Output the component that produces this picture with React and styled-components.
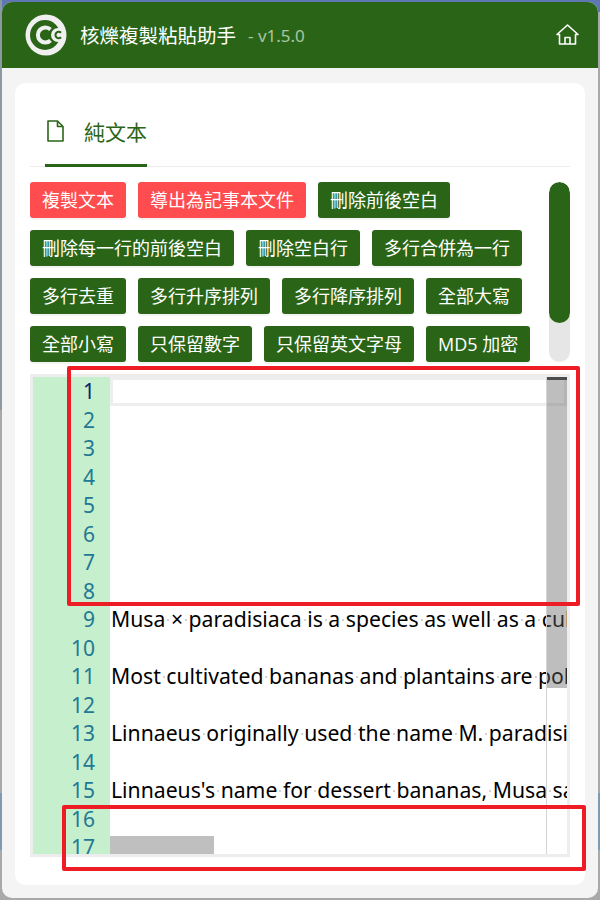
import styled, { createGlobalStyle } from "styled-components";

const GlobalStyle = createGlobalStyle`
  html, body {
    margin: 0;
    height: 900px;
    overflow: hidden;
    background:
      linear-gradient(#8b99a3, #8b99a3) left top / 2px 410px no-repeat,
      linear-gradient(
        to bottom,
        #5f78b4 0,
        #5f78b4 12px,
        #a9a9a9 12px,
        #a9a9a9 793px,
        #7f9ab3 793px,
        #7f9ab3 850px,
        #a9a9a9 850px
      );
    font-family: "Noto Sans", "Noto Sans CJK TC", sans-serif;
  }
`;

const Window = styled.div`
  position: relative;
  box-sizing: border-box;
  width: 596px;
  height: 896px;
  margin: 2px 0 0 2px;
  display: flex;
  flex-direction: column;
  background: #f4f4f4;
  border-radius: 10px;
  overflow: hidden;
`;

const Header = styled.header`
  flex: none;
  height: 66px;
  display: flex;
  align-items: center;
  padding: 0 19px 0 23px;
  background: #2a6517;
  color: #fff;
`;

const Title = styled.h1`
  margin: 0 0 0 13px;
  font-size: 19.5px;
  line-height: 1;
  font-weight: 400;
  font-family: "Noto Sans CJK TC", sans-serif;
`;

const Version = styled.span`
  margin-left: 12px;
  font-size: 17px;
  color: #a9c6a4;
`;

const HomeLink = styled.a`
  margin: -1px 0 0 auto;
  display: flex;
  color: #fff;
`;

const Card = styled.main`
  flex: 1;
  margin: 15px 13px 13px;
  padding: 0 15px;
  display: flex;
  flex-direction: column;
  background: #fff;
  border-radius: 10px;
`;

const Tabs = styled.nav`
  flex: none;
  height: 84px;
  box-sizing: border-box;
  display: flex;
  align-items: flex-end;
  border-bottom: 1px solid #ececec;
  padding-left: 15px;
`;

const Tab = styled.div`
  width: 102px;
  height: 61px;
  box-sizing: border-box;
  display: flex;
  align-items: flex-start;
  gap: 20px;
  padding: 11px 0 0 2px;
  margin-bottom: -1px;
  color: #2a6517;
  border-bottom: 3px solid #2a6517;
  font-size: 21px;
  line-height: 28px;
  font-family: "Noto Sans CJK TC", sans-serif;
  white-space: nowrap;

  svg {
    flex: none;
    margin-top: 3px;
  }
`;

const ToolRow = styled.div`
  flex: none;
  height: 180px;
  margin-top: 15px;
  display: flex;
  justify-content: space-between;
`;

const Buttons = styled.div`
  width: 510px;
  display: flex;
  flex-wrap: wrap;
  align-content: flex-start;
  gap: 12px;
`;

const Button = styled.button`
  height: 36px;
  padding: 0 12px;
  border: 0;
  border-radius: 3px;
  background: ${(p) => (p.$danger ? "#ff4d4f" : "#2a6517")};
  box-shadow: 0 2px 0 rgba(0, 0, 0, 0.045);
  color: #fff;
  font-size: 18px;
  line-height: 36px;
  font-family: "Open Sans", "Noto Sans CJK TC", sans-serif;
  white-space: nowrap;
`;

const ScrollTrack = styled.div`
  width: 21px;
  height: 180px;
  border-radius: 11px;
  background: #e6e6e6;
  overflow: hidden;
`;

const ScrollThumb = styled.div`
  height: 141px;
  border-radius: 11px;
  background: #2a6517;
`;

const Editor = styled.section`
  position: relative;
  flex: none;
  box-sizing: border-box;
  height: 483px;
  margin-top: 12px;
  border: 3px solid #ededed;
  display: flex;
  overflow: hidden;
`;

const Gutter = styled.div`
  flex: none;
  width: 77px;
  box-sizing: border-box;
  padding-right: 15px;
  background: #c6efce;
  text-align: right;
`;

const LineNo = styled.div`
  height: 28.5px;
  font-size: 21px;
  line-height: 28.5px;
  color: ${(p) => (p.$active ? "#0b216f" : "#237893")};
`;

const Code = styled.div`
  flex: 1;
  min-width: 0;
  overflow: hidden;
`;

const CodeLine = styled.div`
  height: 28.5px;
  box-sizing: border-box;
  padding-left: 1px;
  font-size: 21.2px;
  line-height: 28.5px;
  color: #000;
  white-space: pre;
  ${(p) => p.$active && "border: 3px solid #eeeeee;"}
`;

const Space = styled.span`
  position: relative;
  &::after {
    content: "";
    position: absolute;
    left: 2px;
    top: 15px;
    width: 2px;
    height: 2px;
    background: #d2d2d2;
  }
`;

const VScroll = styled.div`
  position: absolute;
  top: 0;
  right: 0;
  bottom: 0;
  width: 21px;
  border-left: 1px solid #d4d4d4;
  box-sizing: border-box;
`;

const VSlider = styled.div`
  height: 311px;
  border-top: 3px solid #4c4c4c;
  box-sizing: border-box;
  background: rgba(100, 100, 100, 0.42);
`;

const HSlider = styled.div`
  position: absolute;
  left: 77px;
  bottom: 0;
  width: 104px;
  height: 18px;
  background: #bfbfbf;
`;

const RedBox = styled.div`
  position: absolute;
  left: ${(p) => p.$left}px;
  top: ${(p) => p.$top}px;
  width: ${(p) => p.$width}px;
  height: ${(p) => p.$height}px;
  box-sizing: border-box;
  border: 4px solid #ee1c25;
  border-radius: 2px;
  pointer-events: none;
`;

const Logo = () => (
  <svg width="42" height="42" viewBox="0 0 42 42">
    <circle cx="21" cy="21" r="20.5" fill="#f0f0f0" />
    <circle cx="20" cy="21" r="15" fill="#2a6517" />
    <path d="M25.5 15.5a7.5 7.5 0 1 0 0 11" fill="none" stroke="#f0f0f0" strokeWidth="4" />
    <circle cx="33" cy="21" r="7" fill="#f0f0f0" />
    <path d="M36 18.8a3.2 3.2 0 1 0 0 4.4" fill="none" stroke="#2a6517" strokeWidth="2" />
  </svg>
);

const HomeIcon = () => (
  <svg width="23" height="21" viewBox="0 0 23 21" fill="none" stroke="currentColor" strokeWidth="1.6" strokeLinejoin="round">
    <path d="M1 10.5 11.5 1 22 10.5H19.5V20H3.5V10.5Z" />
    <path d="M9 20V13.5H14V20" />
  </svg>
);

const FileIcon = () => (
  <svg width="17" height="22" viewBox="0 0 17 22" fill="none" stroke="currentColor" strokeWidth="1.6" strokeLinejoin="round">
    <path d="M1 1H10.5L16 6.5V21H1Z" />
    <path d="M10.5 1V6.5H16" />
  </svg>
);

const buttons = [
  ["複製文本", true],
  ["導出為記事本文件", true],
  ["刪除前後空白"],
  ["刪除每一行的前後空白"],
  ["刪除空白行"],
  ["多行合併為一行"],
  ["多行去重"],
  ["多行升序排列"],
  ["多行降序排列"],
  ["全部大寫"],
  ["全部小寫"],
  ["只保留數字"],
  ["只保留英文字母"],
  ["MD5 加密"],
];

const lines = {
  9: "Musa × paradisiaca is a species as well as a cultivated hybrid",
  11: "Most cultivated bananas and plantains are polyploid",
  13: "Linnaeus originally used the name M. paradisiaca",
  15: "Linnaeus's name for dessert bananas, Musa sapientum",
};

const lineNumbers = Array.from({ length: 17 }, (_, i) => i + 1);

const renderText = (text) =>
  text.split(" ").map((word, i) => (
    <span key={i}>
      {i > 0 && <Space> </Space>}
      {word}
    </span>
  ));

export default function App() {
  return (
    <>
      <GlobalStyle />
      <Window>
        <Header>
          <Logo />
          <Title>核爍複製粘貼助手</Title>
          <Version>- v1.5.0</Version>
          <HomeLink>
            <HomeIcon />
          </HomeLink>
        </Header>
        <Card>
          <Tabs>
            <Tab>
              <FileIcon />
              純文本
            </Tab>
          </Tabs>
          <ToolRow>
            <Buttons>
              {buttons.map(([label, danger]) => (
                <Button key={label} $danger={danger}>
                  {label}
                </Button>
              ))}
            </Buttons>
            <ScrollTrack>
              <ScrollThumb />
            </ScrollTrack>
          </ToolRow>
          <Editor>
            <Gutter>
              {lineNumbers.map((n) => (
                <LineNo key={n} $active={n === 1}>
                  {n}
                </LineNo>
              ))}
            </Gutter>
            <Code>
              {lineNumbers.map((n) => (
                <CodeLine key={n} $active={n === 1}>
                  {lines[n] && renderText(lines[n])}
                </CodeLine>
              ))}
            </Code>
            <VScroll>
              <VSlider />
            </VScroll>
            <HSlider />
          </Editor>
        </Card>
        <RedBox $left={65} $top={364} $width={513} $height={240} />
        <RedBox $left={60} $top={803} $width={524} $height={66} />
      </Window>
    </>
  );
}
